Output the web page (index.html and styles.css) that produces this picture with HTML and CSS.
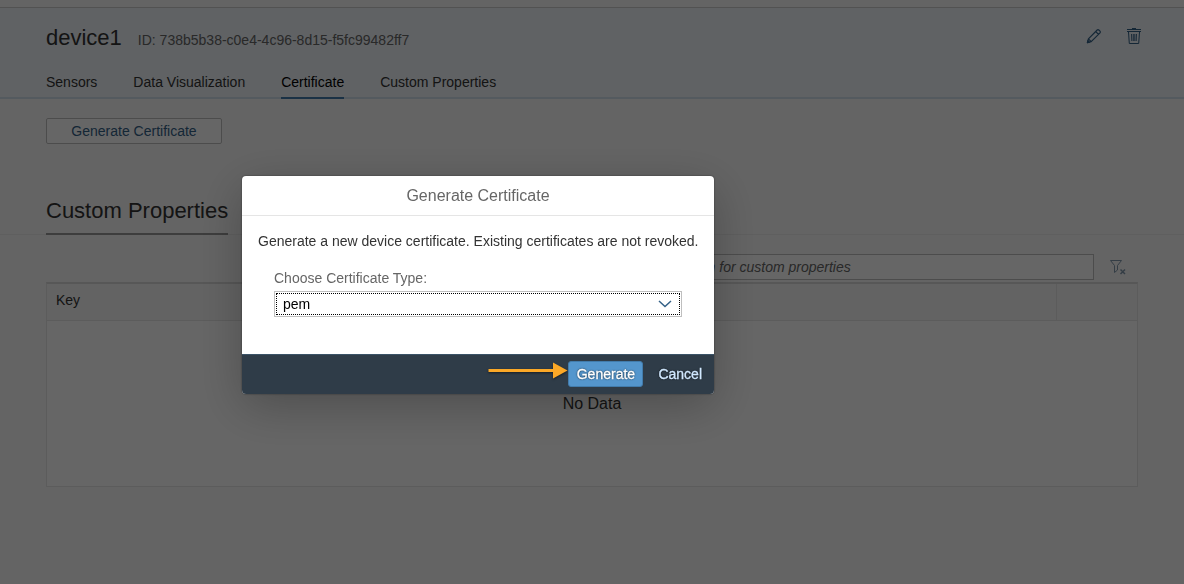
FILE: index.html
```html
<!DOCTYPE html>
<html lang="en">
<head>
<meta charset="utf-8">
<title>device1</title>
<link rel="stylesheet" href="styles.css">
</head>
<body>
<div class="page">
  <header class="header">
    <div class="title-row">
      <h1 class="title">device1</h1>
      <span class="device-id">ID: 738b5b38-c0e4-4c96-8d15-f5fc99482ff7</span>
      <div class="actions">
        <button class="icon-button" type="button" aria-label="Edit">
          <svg width="16" height="16" viewBox="0 0 16 16" fill="none" stroke="currentColor" stroke-width="1.2" stroke-linejoin="round"><path d="M1.400 14.600 2.400 10.800 11.200 2Q12 1.200 12.800 2L14 3.200Q14.800 4 14 4.800L5.200 13.600ZM2.400 10.800 5.200 13.600M9.700 3.500 12.500 6.300"/><path d="M1.400 14.600 1.900 12.600 3.400 14.100Z" fill="currentColor"/></svg>
        </button>
        <button class="icon-button" type="button" aria-label="Delete">
          <svg width="16" height="17" viewBox="0 0 16 17" fill="none" stroke="currentColor"><path d="M1 1.500H15M1 3.500H15"/><path d="M6 .500H10"/><path d="M2.500 4 3.300 15.500H12.700L13.500 4"/><path d="M5.500 6 5.800 13M7.300 6V13M8.800 6V13M10.500 6 10.200 13" stroke-width=".9"/></svg>
        </button>
      </div>
    </div>
    <nav class="tabs">
      <a class="tab" href="#sensors">Sensors</a>
      <a class="tab" href="#visualization">Data Visualization</a>
      <a class="tab tab-selected" href="#certificate">Certificate</a>
      <a class="tab" href="#properties">Custom Properties</a>
    </nav>
  </header>
  <main>
    <section class="certificate">
      <button class="outline-button" type="button">Generate Certificate</button>
    </section>
    <div class="section-bar"><h2 class="section-title">Custom Properties</h2></div>
    <section class="properties">
      <div class="toolbar">
        <input class="search" type="text" placeholder="Search for custom properties" aria-label="Search for custom properties">
        <button class="icon-button filter-button" type="button" aria-label="Clear filter">
          <svg width="18" height="18" viewBox="0 0 18 18" fill="none" stroke="currentColor"><path d="M1.500 2.500H12.500L8.500 7.500V12L5.500 14.500V7.500Z"/><path d="M11.500 11.500 16 16M16 11.500 11.500 16" stroke-width="1.500"/></svg>
        </button>
      </div>
      <table class="table">
        <colgroup><col><col><col class="col-actions"></colgroup>
        <thead><tr><th scope="col">Key</th><th></th><th></th></tr></thead>
        <tbody><tr><td class="no-data" colspan="3">No Data</td></tr></tbody>
      </table>
    </section>
  </main>
</div>
<div class="overlay">
  <div class="dialog" role="dialog" aria-modal="true" aria-labelledby="dialog-title">
    <h2 class="dialog-title" id="dialog-title">Generate Certificate</h2>
    <div class="dialog-body">
      <p class="message">Generate a new device certificate. Existing certificates are not revoked.</p>
      <div class="field">
        <label class="label" for="type">Choose Certificate Type:</label>
        <div class="select-box">
          <select class="select" id="type"><option>pem</option></select>
          <svg class="chevron" width="14" height="8" viewBox="0 0 14 8" fill="none" stroke="currentColor" stroke-width="1.500"><path d="M1 1 7 6.500 13 1"/></svg>
        </div>
      </div>
    </div>
    <footer class="dialog-footer">
      <svg class="arrow" width="80" height="20" viewBox="0 0 80 20"><path d="M.500 8H65V1.500L79.500 9.500 65 17.500V11H.500Z" fill="#fba827"/></svg>
      <button class="primary-button" type="button">Generate</button>
      <button class="text-button" type="button">Cancel</button>
    </footer>
  </div>
</div>
</body>
</html>
```
FILE: styles.css
```css
* { box-sizing: border-box; }

body {
  margin: 0;
  background: #fafafa;
  color: #333;
  font: 14px/20px "Liberation Sans", Arial, sans-serif;
}

button, input, select { font: inherit; margin: 0; }
h1, h2, p { margin: 0; font-weight: 400; }

.page { padding-top: 7px; }

.header {
  padding: 0 38px 0 46px;
  background: #eff4f9;
  border-top: 1px solid #ccc;
  border-bottom: 2px solid #d1e0ee;
}

.title-row {
  display: flex;
  align-items: center;
  gap: 16px;
  height: 58px;
}

.title { padding-top: 2px; font-size: 22px; line-height: 28px; }
.device-id { color: #666; padding-top: 6px; }
.actions { display: flex; gap: 16px; margin-left: auto; padding-bottom: 2px; }

.icon-button {
  display: flex;
  align-items: center;
  justify-content: center;
  width: 24px;
  height: 24px;
  padding: 0;
  border: 0;
  background: none;
  color: #346187;
}

.tabs { display: flex; gap: 36px; margin-bottom: -2px; }

.tab {
  height: 33px;
  padding-top: 6px;
  color: #333;
  text-decoration: none;
}

.tab-selected { color: #000; border-bottom: 2px solid #427cac; }

.certificate { padding: 19px 46px 45px; }

.outline-button {
  display: block;
  width: 176px;
  height: 26px;
  padding: 0;
  border: 1px solid #bfbfbf;
  border-radius: 2px;
  background: #fff;
  color: #346187;
}

.section-bar {
  display: flex;
  padding: 0 46px;
  height: 46px;
  border-bottom: 1px solid #ededed;
}

.section-title {
  height: 46px;
  padding-top: 8px;
  border-bottom: 2px solid #999;
  font-size: 22px;
  line-height: 28px;
}

.properties { padding: 19px 46px; }

.toolbar {
  display: flex;
  justify-content: flex-end;
  align-items: center;
  gap: 12px;
  padding: 0 8px 2px 0;
}

.search {
  width: 434px;
  height: 26px;
  padding: 0 10px;
  border: 1px solid #bfbfbf;
  background: #fff;
}

.search::placeholder { color: #666; font-style: italic; opacity: 1; }
.filter-button { color: #8299ad; }

.table {
  width: 100%;
  table-layout: fixed;
  border-collapse: separate;
  border-spacing: 0;
  border: 1px solid #e5e5e5;
  border-top: 2px solid #d9d9d9;
  background: #fff;
}

.col-actions { width: 80px; }

.table th {
  height: 37px;
  padding: 0 9px 4px;
  border-right: 1px solid #e5e5e5;
  border-bottom: 1px solid #e5e5e5;
  background: #f7f7f7;
  font-weight: 400;
  text-align: left;
}

.table th:last-child { border-right: 0; }
.no-data { height: 165px; padding: 0; font-size: 16px; text-align: center; }

.overlay {
  position: fixed;
  inset: 0;
  display: flex;
  align-items: flex-start;
  padding: 176px 242px 0;
  background: rgba(0, 0, 0, .6);
}

.dialog {
  width: 472px;
  border-radius: 4px;
  overflow: hidden;
  background: #fff;
  box-shadow: 0 0 2px rgba(0, 0, 0, .5), 0 12px 48px rgba(0, 0, 0, .25);
}

.dialog-title {
  height: 40px;
  border-bottom: 1px solid #e5e5e5;
  color: #666;
  font-size: 16px;
  line-height: 39px;
  text-align: center;
}

.dialog-body { padding: 15px 0 37px; }
.message { padding: 0 8px 0 16px; }
.field { padding: 17px 32px 0; }
.label { display: block; margin-bottom: 3px; color: #666; }

.select-box {
  display: grid;
  align-items: center;
  padding: 1px;
  border: 1px solid #bfbfbf;
}

.select {
  grid-area: 1 / 1;
  height: 22px;
  padding: 0 6px;
  border: 1px dotted #000;
  border-radius: 0;
  outline: 0;
  appearance: none;
  background: #fff;
  color: #000;
}

.chevron {
  grid-area: 1 / 1;
  justify-self: end;
  margin-right: 8px;
  color: #346187;
  pointer-events: none;
}

.dialog-footer {
  display: flex;
  align-items: center;
  justify-content: flex-end;
  height: 40px;
  padding: 0 4px 2px 0;
  border-top: 1px solid #3b5367;
  background: #2f3c48;
}

.arrow { margin: 0 0 6px; filter: drop-shadow(0 1px 1px rgba(0, 0, 0, .5)); }

.primary-button, .text-button {
  height: 26px;
  padding: 0 7px;
  border: 1px solid transparent;
  border-radius: 3px;
  background: none;
  color: #d1e8ff;
  text-shadow: 0 0 2px #000;
  -webkit-text-stroke: 0.3px currentColor;
}

.primary-button {
  width: 75px;
  margin-right: 7px;
  border-color: #427cac;
  background: #5496cd;
  color: #fff;
}
```
